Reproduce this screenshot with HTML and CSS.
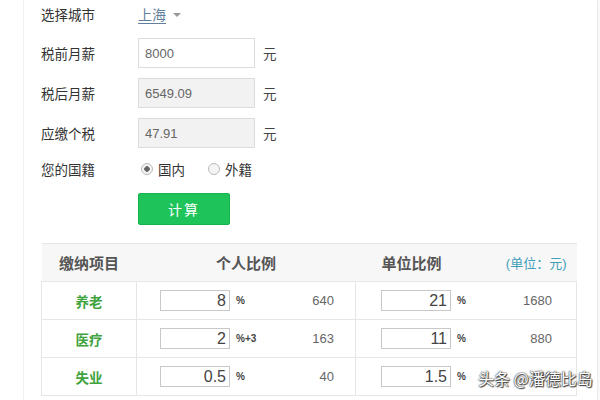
FILE: index.html
```html
<!DOCTYPE html>
<html lang="zh-CN">

<head>
    <meta charset="UTF-8">
    <meta name="viewport" content="width=device-width, initial-scale=1.0">
    <title>个税计算器</title>
    <link rel="stylesheet" href="styles.css">
</head>

<body>
    <div class="page">
        <div class="form-row first">
            <span class="label">选择城市</span>
            <a class="city" href="#">上海</a>
            <span class="caret"></span>
        </div>
        <div class="form-row">
            <span class="label">税前月薪</span>
            <input class="field" type="text" value="8000">
            <span class="unit">元</span>
        </div>
        <div class="form-row">
            <span class="label">税后月薪</span>
            <input class="field readonly" type="text" value="6549.09" readonly>
            <span class="unit">元</span>
        </div>
        <div class="form-row">
            <span class="label">应缴个税</span>
            <input class="field readonly" type="text" value="47.91" readonly>
            <span class="unit">元</span>
        </div>
        <div class="form-row radios">
            <span class="label">您的国籍</span>
            <label class="radio"><span class="dot checked"></span>国内</label>
            <label class="radio"><span class="dot"></span>外籍</label>
        </div>
        <div class="form-row actions">
            <button class="calc">计算</button>
        </div>

        <table class="rates">
            <tr class="head">
                <th class="item">缴纳项目</th>
                <th>个人比例</th>
                <th class="company">
                    <div class="company-head">
                        <span>单位比例</span>
                        <span class="note">(单位：元)</span>
                    </div>
                </th>
            </tr>
            <tr>
                <td class="item">养老</td>
                <td><div class="cell personal"><input class="rate" value="8"><span class="pct">%</span><span class="amount">640</span></div></td>
                <td><div class="cell corp"><input class="rate" value="21"><span class="pct">%</span><span class="amount">1680</span></div></td>
            </tr>
            <tr>
                <td class="item">医疗</td>
                <td><div class="cell personal"><input class="rate" value="2"><span class="pct">%+3</span><span class="amount">163</span></div></td>
                <td><div class="cell corp"><input class="rate" value="11"><span class="pct">%</span><span class="amount">880</span></div></td>
            </tr>
            <tr>
                <td class="item">失业</td>
                <td><div class="cell personal"><input class="rate" value="0.5"><span class="pct">%</span><span class="amount">40</span></div></td>
                <td><div class="cell corp"><input class="rate" value="1.5"><span class="pct">%</span><span class="amount">120</span></div></td>
            </tr>
        </table>
    </div>

    <div class="watermark">头条 @潘德比岛</div>
</body>

</html>
```

FILE: styles.css
```css
* {
    box-sizing: border-box;
    margin: 0;
    padding: 0;
}

body {
    width: 600px;
    height: 400px;
    overflow: hidden;
    background: #fff;
    color: #333;
    font-family: "Liberation Sans", "Noto Sans CJK SC", sans-serif;
    font-size: 13.5px;
}

.page {
    margin-left: 23px;
    width: 575px;
    height: 400px;
    padding-left: 17px;
    border-left: 1px solid #efefef;
    border-right: 1px solid #ececec;
    box-shadow: 2px 0 3px rgba(0, 0, 0, 0.04);
}

.form-row {
    display: flex;
    align-items: center;
    height: 30px;
    margin-top: 10px;
}

.form-row.first {
    height: 28px;
    margin-top: 0;
}

.label {
    width: 97px;
    color: #333;
}

.city {
    color: #5f7f9c;
    font-size: 14px;
    text-decoration: underline;
    text-underline-offset: 3px;
}

.caret {
    margin-left: 7px;
    margin-top: 2px;
    border-left: 4px solid transparent;
    border-right: 4px solid transparent;
    border-top: 4px solid #999;
}

.field {
    width: 117px;
    height: 30px;
    padding-left: 6px;
    border: 1px solid #dcdcdc;
    color: #666;
    font-family: "Liberation Sans", sans-serif;
    font-size: 13px;
    outline: none;
}

.field.readonly {
    background: #f2f2f2;
}

.unit {
    margin-left: 8px;
    color: #444;
}

.radios {
    margin-top: 6px;
}

.radio {
    display: flex;
    align-items: center;
    margin-right: 20px;
    margin-left: 3px;
    color: #333;
}

.dot {
    width: 12px;
    height: 12px;
    margin-right: 5px;
    border: 1px solid #bbb;
    border-radius: 50%;
    background: #f4f4f4;
}

.dot.checked {
    background: radial-gradient(circle, #666 0 2.5px, #f4f4f4 3px);
}

.actions {
    height: 32px;
    margin-top: 9px;
}

.calc {
    width: 92px;
    height: 32px;
    margin-left: 97px;
    border: 1px solid #17b44e;
    border-radius: 2px;
    background: #1ec45a;
    color: #fff;
    font-family: "Noto Sans CJK SC", sans-serif;
    font-size: 14px;
    letter-spacing: 2px;
}

.rates {
    width: 536px;
    margin-top: 18px;
    border-collapse: collapse;
    table-layout: fixed;
}

.rates th,
.rates td {
    border: 1px solid #e6e6e6;
    padding: 0;
}

.rates th:nth-child(1) {
    width: 95px;
}

.rates th:nth-child(2) {
    width: 219px;
}

.head {
    height: 40px;
    background: #f7f7f7;
}

.head th {
    color: #555;
    font-size: 15px;
    font-weight: bold;
    border-left: none;
    border-right: none;
}

.company-head {
    display: flex;
    justify-content: space-between;
    align-items: center;
    padding: 0 10px 0 26px;
}

.note {
    color: #3f9fb8;
    font-size: 13px;
    font-weight: normal;
}

.rates tr {
    height: 38px;
}

td.item {
    color: #3fa340;
    font-weight: bold;
    text-align: center;
}

.cell {
    display: flex;
    align-items: center;
}

.cell.personal {
    padding: 0 21px 0 23px;
}

.cell.corp {
    padding: 0 24px 0 25px;
}

.rate {
    width: 70px;
    height: 21px;
    padding-right: 3px;
    border: 1px solid #c8c8c8;
    color: #444;
    font-family: "Liberation Sans", sans-serif;
    font-size: 16px;
    text-align: right;
    outline: none;
}

.pct {
    margin-left: 6px;
    color: #444;
    font-size: 10px;
    font-weight: bold;
}

.amount {
    flex: 1;
    color: #666;
    font-size: 13px;
    text-align: right;
}

.watermark {
    position: absolute;
    left: 478px;
    top: 366px;
    color: #fff;
    font-family: "Noto Sans CJK SC", sans-serif;
    font-size: 16px;
    text-shadow: 0 0 1px #333, 0 0 2px #333, 1px 1px 1px #444;
}
```
